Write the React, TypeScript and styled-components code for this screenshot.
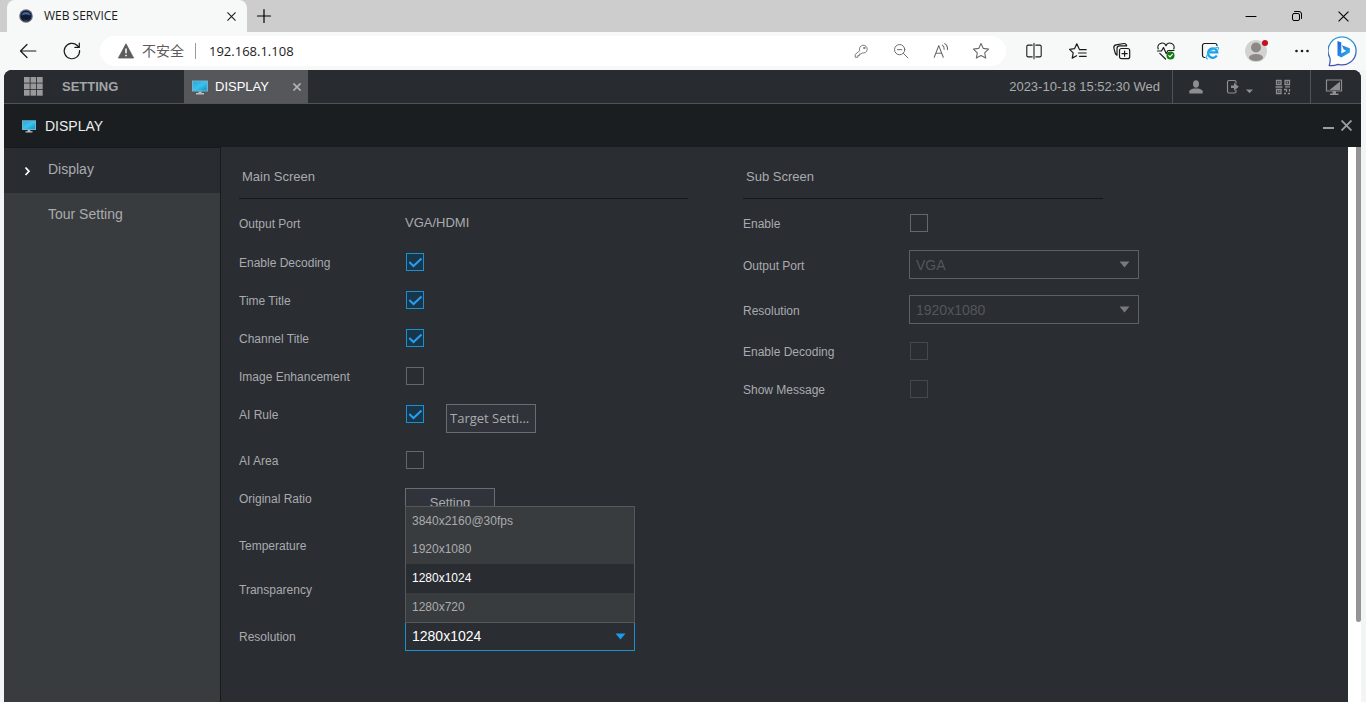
import React, { useState } from "react";
import styled, { createGlobalStyle } from "styled-components";

const ui = '"Liberation Sans", Arial, sans-serif';
const chrome = '"Open Sans", "Noto Sans CJK SC", sans-serif';

const GlobalStyle = createGlobalStyle`
  *, *::before, *::after { box-sizing: border-box; }
  body { margin: 0; background: #f3f4f6; font-family: ${ui}; }
  button, input, select { font-family: inherit; margin: 0; }
  button { padding: 0; border: 0; background: none; color: inherit; cursor: pointer; }
  ul { list-style: none; margin: 0; padding: 0; }
  h1, h2 { margin: 0; font-weight: 400; }
  svg { display: block; flex: none; }
`;

const Shell = styled.div`
  display: flex;
  flex-direction: column;
  min-height: 100vh;
`;

/* Browser window */
const TabStrip = styled.div`
  display: flex;
  height: 32px;
  padding-left: 7px;
  background: #cdcdcd;
  font-family: ${chrome};
`;

const BrowserTab = styled.div`
  display: flex;
  align-items: center;
  width: 240px;
  padding: 0 6px 0 12px;
  border-radius: 8px 8px 0 0;
  background: #f7f8f8;
  color: #1b1b1b;
  font-size: 12px;
`;

const TabTitle = styled.span`
  flex: 1;
  margin-left: 11px;
  padding-bottom: 2px;
`;

const IconButton = styled.button<{ $w?: number; $h?: number }>`
  display: flex;
  align-items: center;
  justify-content: center;
  flex: none;
  width: ${(p) => p.$w ?? 28}px;
  height: ${(p) => p.$h ?? 28}px;
`;

const WindowControls = styled.div`
  display: flex;
  margin-left: auto;
`;

const Toolbar = styled.div`
  display: flex;
  align-items: center;
  height: 38px;
  padding: 0 8px 0 14px;
  background: #f7f8f8;
  color: #1b1b1b;
  font-family: ${chrome};
`;

const NavButtons = styled.div`
  display: flex;
  gap: 16px;
  margin-right: 14px;
`;

const AddressBar = styled.div`
  display: flex;
  align-items: center;
  flex: 1;
  height: 30px;
  padding: 0 11px 0 18px;
  border-radius: 15px;
  background: #fff;
`;

const Warning = styled.span`
  margin: 0 10px 0 8px;
  padding-right: 11px;
  border-right: 1px solid #999;
  color: #5c5c5c;
  font-size: 14px;
  line-height: 16px;
`;

const Address = styled.input`
  flex: 1;
  min-width: 0;
  padding: 0 0 0 3px;
  border: 0;
  outline: 0;
  background: none;
  color: #1b1b1b;
  font-size: 13px;
`;

const AddressActions = styled.div`
  display: flex;
  gap: 12px;
  color: #6a6a6a;
`;

const Extensions = styled.div`
  display: flex;
  gap: 16px;
  margin: 0 18px 0 14px;
`;

const Account = styled.div`
  display: flex;
  align-items: center;
  gap: 18px;
  margin-right: 12px;
`;

/* Device web page */
const Page = styled.div`
  display: flex;
  flex-direction: column;
  flex: 1;
  margin: 0 5px 0 4px;
  border-radius: 8px 8px 0 0;
  background: #1b1e21;
  overflow: hidden;
`;

const TopBar = styled.header`
  display: flex;
  height: 34px;
  border-bottom: 1px solid #505357;
  background: #282b2f;
  color: #a9abae;
  font-size: 13px;
`;

const MenuButton = styled.button`
  display: flex;
  align-items: center;
  gap: 19px;
  width: 180px;
  padding-left: 20px;
  color: #a3a5a8;
  font-size: 13px;
  font-weight: 700;
`;

const PageTab = styled.div`
  display: flex;
  align-items: center;
  width: 124px;
  padding: 0 5px 0 8px;
  background: #55575b;
  color: #fff;
`;

const PageTabName = styled.span`
  flex: 1;
  margin-left: 7px;
`;

const PageTabClose = styled(IconButton)`
  color: #b0b2b5;
`;

const Clock = styled.time`
  margin-left: auto;
  padding-right: 12px;
  line-height: 34px;
`;

const BarGroup = styled.div<{ $left: number; $right: number }>`
  display: flex;
  align-items: center;
  gap: 21px;
  padding: 0 ${(p) => p.$right}px 0 ${(p) => p.$left}px;
  border-left: 1px solid #505357;
  color: #8c8e91;
`;

const TitleBar = styled.div`
  display: flex;
  align-items: center;
  height: 43px;
  padding: 0 6px 0 18px;
  background: #1b1e21;
  color: #9b9da0;
`;

const Title = styled.h1`
  flex: 1;
  margin-left: 9px;
  color: #eceded;
  font-size: 14px;
`;

const Body = styled.div`
  display: flex;
  flex: 1;
`;

const SideNav = styled.nav`
  width: 217px;
  padding-top: 1px;
  border-right: 1px solid #181a1d;
  background: linear-gradient(#181a1d 1px, #393c3e 1px);
`;

const SideLink = styled.a<{ $active?: boolean }>`
  display: flex;
  align-items: center;
  height: 45px;
  padding: 0 0 3px ${(p) => (p.$active ? 19 : 44)}px;
  gap: 16px;
  background: ${(p) => (p.$active ? "#292c31" : "transparent")};
  color: #a9abae;
  font-size: 14px;
  text-decoration: none;
  svg { margin-top: 3px; }
`;

const Content = styled.main`
  display: flex;
  flex: 1;
  gap: 55px;
  align-items: flex-start;
  min-width: 0;
  padding: 0 18px 24px;
  background: #2a2d32;
`;

const Gutter = styled.div`
  width: 13px;
  padding-left: 8px;
  background: #fff;
`;

const Thumb = styled.div`
  width: 5px;
  height: 475px;
  border-radius: 0 0 3px 3px;
  background: #949494;
`;

const Section = styled.section<{ $w: number }>`
  flex: 0 1 ${(p) => p.$w}px;
`;

const SectionTitle = styled.h2<{ $w?: number }>`
  width: ${(p) => (p.$w ? `${p.$w}px` : "100%")};
  height: 52px;
  margin-bottom: 5px;
  padding: 10px 3px;
  border-bottom: 1px solid #15171a;
  color: #a9abae;
  font-size: 13px;
  line-height: 40px;
`;

const Row = styled.div<{ $h?: number; $center?: boolean }>`
  display: grid;
  grid-template-columns: 166px 1fr;
  align-items: ${(p) => (p.$center ? "center" : "start")};
  height: ${(p) => p.$h ?? 38}px;
  color: #a9abae;
  font-size: 12px;
  line-height: 36px;
  > :first-child { padding-top: 2px; }
`;

const Field = styled.div`
  display: flex;
  align-items: center;
  align-self: stretch;
`;

const PlainValue = styled.span`
  font-size: 13px;
  line-height: 38px;
`;

const CheckWrap = styled.span`
  display: grid;
  align-self: flex-start;
  align-items: center;
  width: 20px;
  height: 38px;
  margin-right: 21px;
  padding-left: 1px;
  > * { grid-area: 1 / 1; }
  svg { pointer-events: none; visibility: hidden; }
  input:checked + svg { visibility: visible; }
`;

const CheckInput = styled.input`
  appearance: none;
  width: 18px;
  height: 18px;
  border: 1px solid #65686b;
  background: transparent;
  &:checked { border-color: #1c8fd0; background: #17364a; }
  &:disabled { border-color: #45484c; }
`;

const PushButton = styled.button<{ $chrome?: boolean }>`
  width: 90px;
  height: 29px;
  padding: 0 3px;
  border: 1px solid #696c70;
  background: #30343a;
  color: #a9abae;
  font-family: ${(p) => (p.$chrome ? chrome : ui)};
  font-size: 13px;
  line-height: 26px;
  text-align: ${(p) => (p.$chrome ? "left" : "center")};
  white-space: nowrap;
`;

const SelectWrap = styled.div<{ $on?: boolean }>`
  position: relative;
  display: grid;
  align-items: center;
  width: 230px;
  height: 29px;
  color: ${(p) => (p.$on ? "#1c9bea" : "#77797c")};
  > select, > svg { grid-area: 1 / 1; }
  > svg { justify-self: end; margin-right: 9px; pointer-events: none; }
`;

const SelectBox = styled.select`
  appearance: none;
  width: 100%;
  height: 29px;
  padding: 0 6px;
  border: 1px solid #1c8fd0;
  border-radius: 0;
  outline: 0;
  background: #2a2d32;
  color: #fff;
  font-size: 14px;
  &:disabled { border-color: #5c5f63; color: #54575a; opacity: 1; }
`;

const OptionList = styled.ul`
  position: absolute;
  right: 0;
  bottom: 28px;
  left: 0;
  border: 1px solid #56595c;
  background: #393c3e;
`;

const Option = styled.li<{ $picked: boolean }>`
  padding: 0 6px;
  background: ${(p) => (p.$picked ? "#292c31" : "transparent")};
  color: ${(p) => (p.$picked ? "#fff" : "#a9abae")};
  font-size: 12px;
  line-height: 29px;
  cursor: pointer;
  &:first-child { line-height: 28px; }
`;

type LineProps = { size?: number; w?: number; children: React.ReactNode };
const Line = ({ size = 20, w = 1.2, children }: LineProps) => (
  <svg width={size} height={size} viewBox="0 0 20 20" fill="none" stroke="currentColor" strokeWidth={w} strokeLinecap="round" strokeLinejoin="round" aria-hidden="true">
    {children}
  </svg>
);

const Monitor = ({ w }: { w: number }) => (
  <svg width={w} height={w} viewBox="0 0 16 16" aria-hidden="true">
    <defs>
      <linearGradient id="screen" x1="0" y1="0" x2="1" y2="1">
        <stop offset="0" stopColor="#2aa5e0" />
        <stop offset="0.5" stopColor="#38c4ec" />
        <stop offset="1" stopColor="#1590c8" />
      </linearGradient>
    </defs>
    <path d="M0 1.500h16v11H0z" fill="#6fb4cd" />
    <path d="M1.200 2.500h13.600v9H1.200z" fill="url(#screen)" />
    <path d="M6.500 12.500h3V14H12v1.500H4V14h2.500z" fill="#b5c0c5" />
  </svg>
);

const Cross = ({ size, w }: { size: number; w: number }) => (
  <svg width={size} height={size} viewBox="0 0 10 10" stroke="currentColor" strokeWidth={w} aria-hidden="true">
    <path d="M0.5 0.5l9 9M9.5 0.5l-9 9" />
  </svg>
);

const Arrow = () => (
  <svg width="11" height="7" viewBox="0 0 11 7" fill="currentColor" aria-hidden="true">
    <path d="M0.5 0.5h10L5.5 6.500z" />
  </svg>
);

const Check = (props: { id: string; checked?: boolean; disabled?: boolean }) => (
  <CheckWrap>
    <CheckInput type="checkbox" id={props.id} defaultChecked={props.checked} disabled={props.disabled} />
    <svg width="18" height="18" viewBox="0 0 18 18" fill="none" stroke="#2a9df0" strokeWidth="2" aria-hidden="true">
      <path d="M3.300 9l4.200 4 8-7.500" />
    </svg>
  </CheckWrap>
);

const BrowserChrome = () => (
  <>
    <TabStrip>
      <BrowserTab>
        <svg width="14" height="14" viewBox="0 0 14 14" aria-hidden="true">
          <circle cx="7" cy="7" r="6.8" fill="#6d6a78" />
          <circle cx="7" cy="7" r="5.6" fill="#101a33" />
          <path d="M2.4 6.6a4.7 4.4 0 0 1 9.2 0q-4.6-2-9.2 0z" fill="#3f6496" />
          <path d="M4 10q3 2 6 0-1 2-3 2t-3-2z" fill="#33456e" />
        </svg>
        <TabTitle>WEB SERVICE</TabTitle>
        <IconButton $w={20} $h={20} aria-label="Close tab"><Cross size={9} w={1.2} /></IconButton>
      </BrowserTab>
      <IconButton $w={34} $h={32} aria-label="New tab">
        <Line><path d="M10 3.5v13M3.5 10h13" /></Line>
      </IconButton>
      <WindowControls>
        <IconButton $w={46} $h={32} aria-label="Minimize"><Line w={1}><path d="M5 10.5h10" /></Line></IconButton>
        <IconButton $w={46} $h={32} aria-label="Restore">
          <Line w={1}>
            <rect x="5.5" y="7.500" width="7" height="7" rx="1.5" />
            <path d="M7.5 5.5h4.500a2.500 2.500 0 0 1 2.500 2.500v4.500" />
          </Line>
        </IconButton>
        <IconButton $w={46} $h={32} aria-label="Close"><Cross size={11} w={1} /></IconButton>
      </WindowControls>
    </TabStrip>
    <Toolbar>
      <NavButtons>
        <IconButton aria-label="Back"><Line><path d="M17.8 10H2.5M9 3.5L2.5 10 9 16.5" /></Line></IconButton>
        <IconButton aria-label="Refresh">
          <Line><path d="M17.6 9.5a7.7 7.7 0 1 1-2.3-5L17 6.1M17.3 2v4.4h-4.4" /></Line>
        </IconButton>
      </NavButtons>
      <AddressBar>
        <svg width="16" height="16" viewBox="0 0 16 16" aria-hidden="true">
          <path d="M8 0.8L15.6 15H0.4z" fill="#5c5c5c" stroke="#5c5c5c" strokeLinejoin="round" strokeWidth="0.8" />
          <path d="M8 5.5v4.8M8 11.7v1.6" stroke="#fff" strokeWidth="1.5" />
        </svg>
        <Warning>不安全</Warning>
        <Address aria-label="Address" defaultValue="192.168.1.108" />
        <AddressActions>
          <IconButton aria-label="Passwords">
            <Line size={16} w={1.1}>
              <path d="M8.2 9.2a4.9 4.9 0 1 1 3.3 3.2L10 13.8H8v2H6v2H2.8v-3z" />
              <circle cx="14" cy="6.2" r="0.9" />
            </Line>
          </IconButton>
          <IconButton aria-label="Zoom out">
            <Line size={18} w={1.1}><circle cx="8.5" cy="8.5" r="5.7" /><path d="M12.7 12.7l5 5M6 8.5h5" /></Line>
          </IconButton>
          <IconButton aria-label="Read aloud">
            <Line size={18} w={1.2}><path d="M2.500 17L7.500 4l5 13M4.300 12.500h6.500M11.500 3.500q2.200 1.500 2 4.500M14.200 1.800q3.500 2.500 3 6.700" /></Line>
          </IconButton>
          <IconButton aria-label="Add to favorites">
            <Line size={20} w={1.1}><path d="M10 2.500l2.300 4.900 5.300.7-3.900 3.700 1 5.300L10 14.500l-4.700 2.600 1-5.300-3.900-3.700 5.300-.7z" /></Line>
          </IconButton>
        </AddressActions>
      </AddressBar>
      <Extensions>
        <IconButton aria-label="Split screen">
          <Line size={18}><path d="M8 3.500H3.500A1.500 1.500 0 0 0 2 5v10A1.500 1.500 0 0 0 3.500 16.500H8M12 3.500h4.500A1.500 1.500 0 0 1 18 5v10a1.500 1.500 0 0 1-1.500 1.500H12M10 1.500v17" /></Line>
        </IconButton>
        <IconButton aria-label="Favorites">
          <Line size={20}><path d="M11.200 8L8.800 2.800 6.500 7.700l-4.900.7 3.600 3.500-1 5.200 4.400-2.400M11.500 8.700h6.700M10.500 12h7.700M11.500 15.300h6.700" /></Line>
        </IconButton>
        <IconButton aria-label="Collections">
          <Line size={20}><rect x="7.500" y="7.500" width="10.200" height="10.200" rx="2" /><path d="M12.600 10v5.200M10 12.600h5.200M5 14.200Q3.600 13.500 3.200 12L1.900 7.200M5 14.200V7.500Q5 4.800 7.700 4.800h7Q14.200 2.400 12 2.500L4 3.800Q1.300 4.600 1.900 7.200" /></Line>
        </IconButton>
        <IconButton aria-label="Browser essentials">
          <Line size={20}>
            <path d="M2.200 8a4.200 4.200 0 0 1 7.800-3.300A4.200 4.200 0 0 1 17.800 8M1.500 10h4l2-3.500 2.700 6L12 9.500h6M3.800 12.300L9.500 18" />
            <circle cx="14.500" cy="14.500" r="4" fill="#107c10" stroke="none" />
            <path d="M12.800 14.600l1.200 1.200 2.300-2.500" stroke="#fff" />
          </Line>
        </IconButton>
        <IconButton aria-label="Reload in Internet Explorer mode">
          <Line size={20}>
            <path d="M5 16.500H4.500A2 2 0 0 1 2.500 14.500V4.500A2 2 0 0 1 4.500 2.500h10.500A2 2 0 0 1 17 4.500" />
            <path d="M16.800 14.500a4.700 4.700 0 1 1 .6-3.100H8.500" stroke="#1da1e6" strokeWidth="2.300" strokeLinecap="butt" />
            <path d="M7.500 17.800q-2.500-.2.500-5t9.500-6.500q1.500.2.800 2" stroke="#33b5f0" strokeWidth="1.200" />
          </Line>
        </IconButton>
      </Extensions>
      <Account>
        <IconButton aria-label="Profile">
          <svg width="28" height="28" viewBox="0 0 28 28" aria-hidden="true">
            <circle cx="14" cy="14" r="11" fill="#d4d2d0" />
            <circle cx="14" cy="10.5" r="5" fill="#8b8886" />
            <ellipse cx="14" cy="20.5" rx="7" ry="3.6" fill="#8b8886" />
            <circle cx="23" cy="6" r="3" fill="#c50f1f" />
          </svg>
        </IconButton>
        <IconButton aria-label="More">
          <svg width="16" height="4" viewBox="0 0 16 4" fill="#1b1b1b" aria-hidden="true">
            <circle cx="2.5" cy="2" r="1.3" /><circle cx="8" cy="2" r="1.3" /><circle cx="13.5" cy="2" r="1.3" />
          </svg>
        </IconButton>
      </Account>
      <IconButton $w={30} $h={32} aria-label="Bing">
        <svg width="30" height="32" viewBox="0 0 30 32" aria-hidden="true">
          <defs>
            <linearGradient id="ring" x1="0" y1="0" x2="0" y2="1">
              <stop offset="0" stopColor="#2aa0d8" /><stop offset="1" stopColor="#4550b0" />
            </linearGradient>
            <linearGradient id="bee" x1="0" y1="0" x2="1" y2="1">
              <stop offset="0" stopColor="#1d5fd8" /><stop offset="1" stopColor="#2fb4ee" />
            </linearGradient>
          </defs>
          <path d="M1.200 30.500Q2.500 27 2 23A14 14 0 1 1 10 29.300Q6 31 1.200 30.500z" fill="#fff" stroke="url(#ring)" strokeWidth="1.300" strokeLinejoin="round" />
          <path d="M9.500 6l3.800 1.400v11.200l5-2.800-2.600-1.200-1.800-4.300 8 2.900v4.400l-8.600 5-3.800-2.200z" fill="url(#bee)" />
        </svg>
      </IconButton>
    </Toolbar>
  </>
);

const GridIcon = () => (
  <svg width="19" height="19" viewBox="0 0 19 19" fill="#97999c" aria-hidden="true">
    {[0, 6.5, 13].map((y) => [0, 6.5, 13].map((x) => <rect key={`${x}-${y}`} x={x} y={y} width="5.7" height="5.7" />))}
  </svg>
);

const resolutions = ["3840x2160@30fps", "1920x1080", "1280x1024", "1280x720"];

const MainScreen = () => {
  const [resolution, setResolution] = useState("1280x1024");
  return (
    <Section $w={449}>
      <SectionTitle>Main Screen</SectionTitle>
      <Row $h={39}><span>Output Port</span><PlainValue>VGA/HDMI</PlainValue></Row>
      <Row><label htmlFor="decoding">Enable Decoding</label><Field><Check id="decoding" checked /></Field></Row>
      <Row><label htmlFor="time">Time Title</label><Field><Check id="time" checked /></Field></Row>
      <Row><label htmlFor="channel">Channel Title</label><Field><Check id="channel" checked /></Field></Row>
      <Row><label htmlFor="enhance">Image Enhancement</label><Field><Check id="enhance" /></Field></Row>
      <Row $h={46}>
        <label htmlFor="rule">AI Rule</label>
        <Field><Check id="rule" checked /><PushButton $chrome>Target Setti...</PushButton></Field>
      </Row>
      <Row><label htmlFor="area">AI Area</label><Field><Check id="area" /></Field></Row>
      <Row $h={47}><span>Original Ratio</span><Field><PushButton>Setting</PushButton></Field></Row>
      <Row $h={44}><span>Temperature</span></Row>
      <Row $h={47}><span>Transparency</span></Row>
      <Row>
        <label htmlFor="resolution">Resolution</label>
        <Field>
          <SelectWrap $on>
            <SelectBox id="resolution" value={resolution} onChange={(e) => setResolution(e.target.value)}>
              {resolutions.map((r) => <option key={r}>{r}</option>)}
            </SelectBox>
            <Arrow />
            <OptionList role="listbox" aria-label="Resolution">
              {resolutions.map((r) => (
                <Option key={r} role="option" aria-selected={r === resolution} $picked={r === resolution} onClick={() => setResolution(r)}>{r}</Option>
              ))}
            </OptionList>
          </SelectWrap>
        </Field>
      </Row>
    </Section>
  );
};

const SubScreen = () => (
  <Section $w={396}>
    <SectionTitle $w={360}>Sub Screen</SectionTitle>
    <Row><label htmlFor="sub-enable">Enable</label><Field><Check id="sub-enable" /></Field></Row>
    <Row $h={45} $center>
      <label htmlFor="sub-port">Output Port</label>
      <SelectWrap><SelectBox id="sub-port" disabled><option>VGA</option></SelectBox><Arrow /></SelectWrap>
    </Row>
    <Row $h={45} $center>
      <label htmlFor="sub-resolution">Resolution</label>
      <SelectWrap><SelectBox id="sub-resolution" disabled><option>1920x1080</option></SelectBox><Arrow /></SelectWrap>
    </Row>
    <Row><label htmlFor="sub-decoding">Enable Decoding</label><Field><Check id="sub-decoding" disabled /></Field></Row>
    <Row><label htmlFor="sub-message">Show Message</label><Field><Check id="sub-message" disabled /></Field></Row>
  </Section>
);

export default function App() {
  return (
    <Shell>
      <GlobalStyle />
      <BrowserChrome />
      <Page>
        <TopBar>
          <MenuButton><GridIcon />SETTING</MenuButton>
          <PageTab>
            <Monitor w={16} />
            <PageTabName>DISPLAY</PageTabName>
            <PageTabClose $w={12} $h={20} aria-label="Close DISPLAY"><Cross size={8} w={2} /></PageTabClose>
          </PageTab>
          <Clock>2023-10-18 15:52:30 Wed</Clock>
          <BarGroup $left={15} $right={18}>
            <IconButton $w={16} aria-label="User">
              <svg width="14" height="14" viewBox="0 0 14 14" fill="currentColor" aria-hidden="true">
                <ellipse cx="7" cy="4" rx="3" ry="3.7" /><path d="M0.300 13.500V11q.5-1.500 4.500-2.500h4.400q4 1 4.500 2.500v2.500z" />
              </svg>
            </IconButton>
            <IconButton aria-label="Log out">
              <svg width="28" height="16" viewBox="0 0 28 16" aria-hidden="true">
                <path d="M11 4.500V3Q11 1.500 9.500 1.500H4Q2.500 1.500 2.500 3v9.500Q2.500 14 4 14h5.500Q11 14 11 12.500V11" fill="none" stroke="currentColor" strokeWidth="1.2" />
                <path d="M6 6.500H9V3.700l4.800 4.100L9 11.800V9H6zM21 10.500h7l-3.500 3.800z" fill="currentColor" />
              </svg>
            </IconButton>
            <IconButton $w={18} aria-label="QR code">
              <svg width="16" height="16" viewBox="0 0 16 16" fill="none" stroke="currentColor" strokeWidth="1.3" aria-hidden="true">
                <path d="M1.500 1.500h4.500v4h-4.500zM10 1.500h4.500v4H10zM1.500 10.500h4.500v4h-4.500zM0.500 8h7M10 7.800h5M9 10.500h2.500v2.500M14.500 10v2.500M9 14.500h2M12.800 14.500h2.200M3 3.500h1.500M11.500 3.500H13M3 12.500h1.500" />
              </svg>
            </IconButton>
          </BarGroup>
          <BarGroup $left={13} $right={17}>
            <IconButton $w={20} aria-label="Preview">
              <svg width="18" height="18" viewBox="0 0 18 18" fill="currentColor" aria-hidden="true">
                <path d="M1.500 2h15v11h-15z" fill="none" stroke="currentColor" strokeWidth="1.2" />
                <path d="M15 3.500V12H4.500zM7.500 13h3.500v2.500h2.500V17h-8.500v-1.500h2.500z" />
              </svg>
            </IconButton>
          </BarGroup>
        </TopBar>
        <TitleBar>
          <Monitor w={14} />
          <Title>DISPLAY</Title>
          <IconButton $w={18} aria-label="Minimize page">
            <svg width="11" height="12" viewBox="0 0 11 12" aria-hidden="true"><path d="M0 8h11" stroke="currentColor" strokeWidth="2" /></svg>
          </IconButton>
          <IconButton $w={18} aria-label="Close page"><Cross size={11} w={1.7} /></IconButton>
        </TitleBar>
        <Body>
          <SideNav>
            <SideLink href="#display" $active>
              <svg width="9" height="10" viewBox="0 0 9 10" fill="none" stroke="#fff" strokeWidth="1.7" aria-hidden="true"><path d="M2.5 1.5L6 5.3 2.5 9" /></svg>
              Display
            </SideLink>
            <SideLink href="#tour">Tour Setting</SideLink>
          </SideNav>
          <Content>
            <MainScreen />
            <SubScreen />
          </Content>
          <Gutter><Thumb /></Gutter>
        </Body>
      </Page>
    </Shell>
  );
}
